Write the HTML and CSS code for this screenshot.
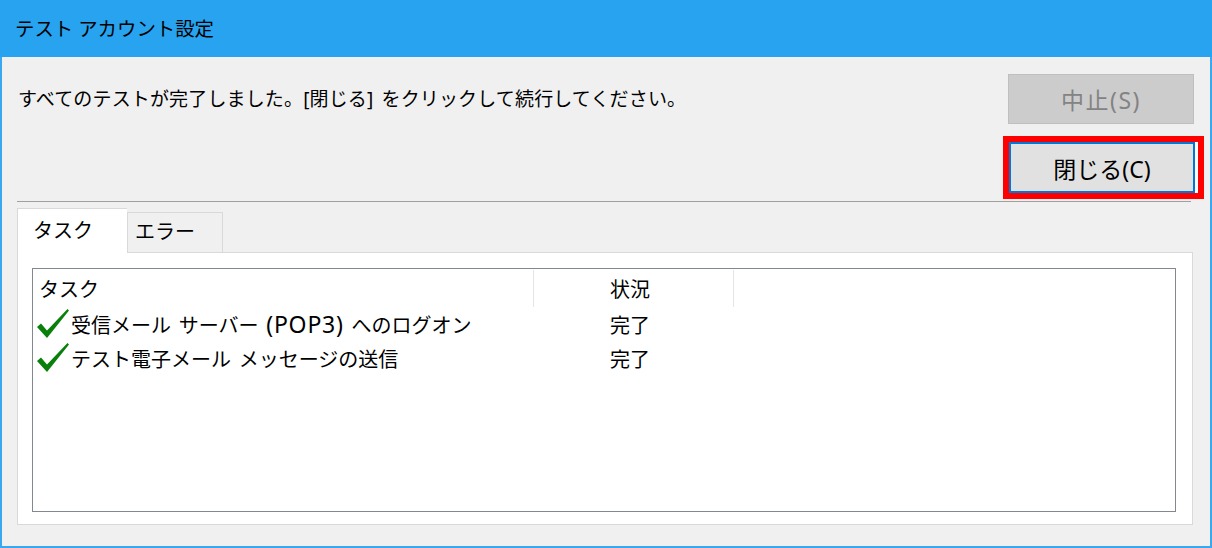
FILE: index.html
```html
<!DOCTYPE html>
<html lang="ja">
<head>
<meta charset="utf-8">
<title>テスト アカウント設定</title>
<link rel="stylesheet" href="styles.css">
</head>
<body>
<div class="window">
  <div class="titlebar">テスト アカウント設定</div>
  <div class="content">
    <div class="top">
      <p class="message">すべてのテストが完了しました。[閉じる] をクリックして続行してください。</p>
      <div class="actions">
        <button class="btn btn-disabled" disabled>中止(S)</button>
        <div class="highlight">
          <button class="btn btn-default">閉じる(C)</button>
        </div>
      </div>
    </div>
    <div class="separator"></div>
    <div class="tabs">
      <div class="tab tab-active">タスク</div>
      <div class="tab">エラー</div>
    </div>
    <div class="panel">
      <div class="list">
        <div class="list-header">
          <div class="col col-task">タスク</div>
          <div class="col col-status">状況</div>
          <div class="col col-rest"></div>
        </div>
        <div class="row">
          <div class="cell cell-task">
            <svg class="check" viewBox="0 0 32 29" width="32" height="29"><path d="M0 18 L4 14.5 L10 21.5 L30.5 0 L32 1.5 L10 29 Z" fill="#0a800c"/></svg>
            <span class="label">受信メール サーバー <span class="latin">(POP3)</span> へのログオン</span>
          </div>
          <div class="cell cell-status">完了</div>
        </div>
        <div class="row">
          <div class="cell cell-task">
            <svg class="check" viewBox="0 0 32 29" width="32" height="29"><path d="M0 18 L4 14.5 L10 21.5 L30.5 0 L32 1.5 L10 29 Z" fill="#0a800c"/></svg>
            <span class="label">テスト電子メール メッセージの送信</span>
          </div>
          <div class="cell cell-status">完了</div>
        </div>
      </div>
    </div>
  </div>
</div>
</body>
</html>
```

FILE: styles.css
```css
* { box-sizing: border-box; }
html, body { margin: 0; padding: 0; }
body {
  font-family: "Noto Sans", "Noto Sans CJK JP", sans-serif;
  color: #000;
  background: #f0f0f0;
}
.window {
  width: 1212px;
  height: 548px;
  display: flex;
  flex-direction: column;
  border: 2px solid #3aa8f1;
  border-top: none;
  background: #f0f0f0;
}
.titlebar {
  height: 57px;
  margin: 0 -2px;
  padding-left: 15px;
  background: #27a3ef;
  font-size: 19.4px;
  line-height: 57px;
  flex: none;
}
.content {
  flex: 1;
  display: flex;
  flex-direction: column;
  padding: 17px 7px 0 15px;
}
.top {
  display: flex;
  justify-content: space-between;
  align-items: flex-start;
}
.message {
  margin: 13px 0 0 1px;
  font-size: 19px;
  line-height: 24px;
  letter-spacing: 0.15px;
  word-spacing: 3px;
}
.actions {
  width: 200px;
  display: flex;
  flex-direction: column;
  align-items: flex-start;
  gap: 12px;
}
.btn {
  font-family: inherit;
  font-size: 23px;
  width: 186px;
  height: 50px;
  margin: 0;
  padding: 0;
  color: #000;
}
.btn-disabled {
  margin-left: 5px;
  background: #cccccc;
  border: 1px solid #bfbfbf;
  color: #838383;
  letter-spacing: 1.5px;
}
.highlight {
  border: 6px solid #ff0000;
  padding-right: 3px;
  background: #ffffff;
  display: flex;
}
.btn-default {
  height: 51px;
  background: #e1e1e1;
  border: 2px solid #0078d7;
}
.separator {
  height: 1px;
  background: #a0a0a0;
  margin: 2px 12px 0 0;
}
.tabs {
  display: flex;
  align-items: flex-end;
  margin: 6px 0 0 0;
  position: relative;
  z-index: 1;
}
.tab {
  width: 96px;
  height: 40px;
  border: 1px solid #d9d9d9;
  border-bottom: none;
  background: #f0f0f0;
  font-size: 20px;
  line-height: 38px;
  padding-left: 7px;
}
.tab-active {
  width: 110px;
  height: 45px;
  background: #ffffff;
  line-height: 44px;
  padding-left: 15px;
  margin-bottom: -1px;
  border-right: none;
}
.panel {
  margin: 0 10px 21px 0;
  flex: 1;
  background: #ffffff;
  border: 1px solid #d9d9d9;
  padding: 15px 16px 12px 14px;
  display: flex;
}
.list {
  flex: 1;
  border: 1px solid #828790;
  background: #ffffff;
  padding-top: 1px;
  font-size: 20px;
}
.list-header {
  display: flex;
  height: 37px;
}
.col {
  line-height: 40px;
  border-right: 1px solid #e5e5e5;
  height: 37px;
}
.col-task { width: 501px; padding-left: 6px; }
.col-status { width: 200px; padding-left: 76px; }
.col-rest { border-right: none; flex: 1; }
.row {
  display: flex;
  height: 34px;
  align-items: center;
}
.cell-task {
  width: 501px;
  display: flex;
  align-items: center;
  padding-left: 4px;
  gap: 2px;
}
.label { word-spacing: 2.5px; white-space: nowrap; }
.latin { font-size: 23px; letter-spacing: 0.8px; line-height: 1; }
.check { flex: none; margin-top: -2px; }
.cell-status { padding-left: 76px; }
```
